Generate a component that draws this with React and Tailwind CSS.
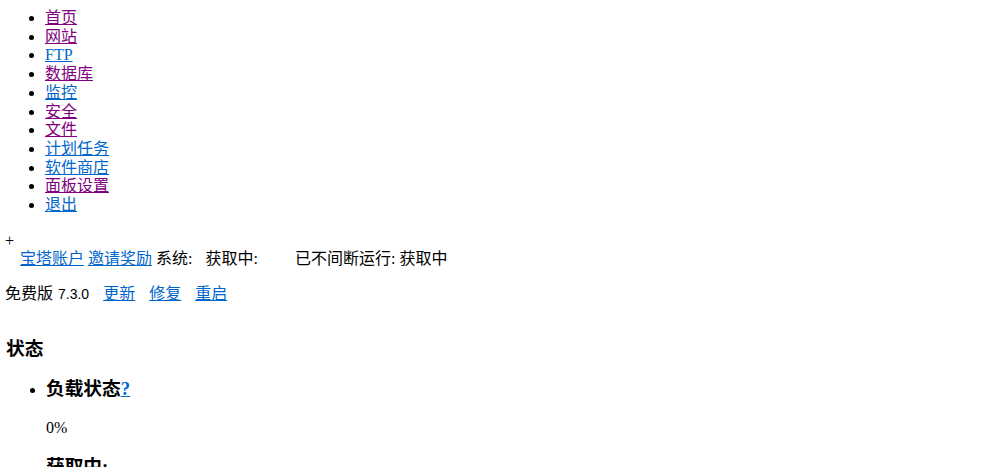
import React from "react";

const navItems = [
  { label: "首页", visited: true },
  { label: "网站", visited: true },
  { label: "FTP", visited: false },
  { label: "数据库", visited: true },
  { label: "监控", visited: false },
  { label: "安全", visited: true },
  { label: "文件", visited: true },
  { label: "计划任务", visited: false },
  { label: "软件商店", visited: false },
  { label: "面板设置", visited: true },
  { label: "退出", visited: false },
];

const App = () => {
  return (
    <div className="bg-white text-black text-[16px] leading-[18.7px] font-['Liberation_Serif','Noto_Sans_CJK_SC',serif] min-h-[467px]">
      <ul className="list-disc pl-[45px] pt-[9px]">
        {navItems.map((item) => (
          <li key={item.label}>
            <a
              href="#"
              className={
                item.visited
                  ? "underline text-[#800080]"
                  : "underline text-[#0066cc]"
              }
            >
              {item.label}
            </a>
          </li>
        ))}
      </ul>

      <div className="mt-[17px] pl-[5px]">+</div>
      <div className="pl-[20px] flex items-baseline whitespace-nowrap">
        <a href="#" className="underline text-[#0066cc]">宝塔账户</a>
        <a href="#" className="underline text-[#0066cc] ml-[4px]">邀请奖励</a>
        <span className="ml-[4px]">系统:</span>
        <span className="ml-[13px]">获取中:</span>
        <span className="ml-[37px]">已不间断运行: 获取中</span>
      </div>

      <div className="mt-[16px] pl-[5px] flex items-baseline whitespace-nowrap">
        <span>免费版</span>
        <span className="ml-[5px] text-[14px] font-['Liberation_Sans',sans-serif]">7.3.0</span>
        <a href="#" className="underline text-[#0066cc] ml-[14px]">更新</a>
        <a href="#" className="underline text-[#0066cc] ml-[14px]">修复</a>
        <a href="#" className="underline text-[#0066cc] ml-[14px]">重启</a>
      </div>

      <h3 className="mt-[34px] pl-[6px] text-[18.7px] leading-[22px] font-bold">状态</h3>
      <ul className="list-disc pl-[46px] mt-[18px]">
        <li>
          <h3 className="text-[18.7px] leading-[22px] font-bold">
            负载状态
            <a href="#" className="underline text-[#0066cc]">?</a>
          </h3>
          <p className="mt-[19px]">0%</p>
          <h3 className="mt-[18px] text-[18.7px] leading-[22px] font-bold">获取中:</h3>
        </li>
      </ul>
    </div>
  );
};

export default App;
